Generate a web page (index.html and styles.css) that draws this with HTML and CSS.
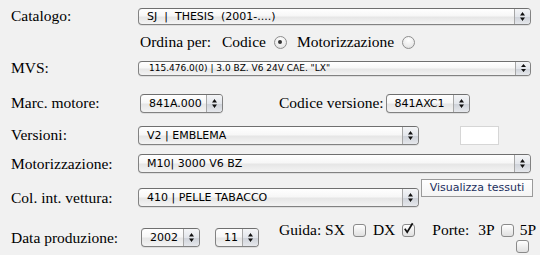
FILE: index.html
```html
<!DOCTYPE html>
<html>
<head>
<meta charset="utf-8">
<link rel="stylesheet" href="styles.css">
</head>
<body>
<div class="form">
  <div class="row r1">
    <div class="label">Catalogo:</div>
    <div class="sel w-full"><span class="val">SJ&nbsp;&nbsp;|&nbsp;&nbsp;THESIS&nbsp;&nbsp;(2001-....)</span><span class="arr"><svg width="5" height="9" viewBox="0 0 5 9"><path d="M2.5 0 L5 3.5 H0 Z M0 5.5 H5 L2.5 9 Z"/></svg></span></div>
  </div>
  <div class="row r2">
    <div class="label"></div>
    <div class="order">
      <span class="t-ordina">Ordina per:</span>
      <span class="t-opt">Codice</span><span class="radio on"></span>
      <span class="t-opt">Motorizzazione</span><span class="radio"></span>
    </div>
  </div>
  <div class="row r3">
    <div class="label">MVS:</div>
    <div class="sel mini w-full"><span class="val">115.476.0(0) | 3.0 BZ. V6 24V CAE. "LX"</span><span class="arr"><svg width="5" height="8" viewBox="0 0 5 8"><path d="M2.5 0 L5 3 H0 Z M0 5 H5 L2.5 8 Z"/></svg></span></div>
  </div>
  <div class="row r4">
    <div class="label">Marc. motore:</div>
    <div class="cell-a"><div class="sel w-marc"><span class="val">841A.000</span><span class="arr"><svg width="5" height="9" viewBox="0 0 5 9"><path d="M2.5 0 L5 3.5 H0 Z M0 5.5 H5 L2.5 9 Z"/></svg></span></div></div>
    <span class="t-inline">Codice versione:</span>
    <div class="sel w-cv"><span class="val">841AXC1</span><span class="arr"><svg width="5" height="9" viewBox="0 0 5 9"><path d="M2.5 0 L5 3.5 H0 Z M0 5.5 H5 L2.5 9 Z"/></svg></span></div>
  </div>
  <div class="row r5">
    <div class="label">Versioni:</div>
    <div class="sel w-half"><span class="val">V2 | EMBLEMA</span><span class="arr"><svg width="5" height="9" viewBox="0 0 5 9"><path d="M2.5 0 L5 3.5 H0 Z M0 5.5 H5 L2.5 9 Z"/></svg></span></div>
    <div class="box"></div>
  </div>
  <div class="row r6">
    <div class="label">Motorizzazione:</div>
    <div class="sel w-full"><span class="val">M10| 3000 V6 BZ</span><span class="arr"><svg width="5" height="9" viewBox="0 0 5 9"><path d="M2.5 0 L5 3.5 H0 Z M0 5.5 H5 L2.5 9 Z"/></svg></span></div>
  </div>
  <div class="row r7">
    <div class="label">Col. int. vettura:</div>
    <div class="sel w-half"><span class="val">410 | PELLE TABACCO</span><span class="arr"><svg width="5" height="9" viewBox="0 0 5 9"><path d="M2.5 0 L5 3.5 H0 Z M0 5.5 H5 L2.5 9 Z"/></svg></span></div>
    <button class="btn">Visualizza tessuti</button>
  </div>
  <div class="row r8">
    <div class="label">Data produzione:</div>
    <div class="cell-a dates">
      <div class="sel w-year"><span class="val">2002</span><span class="arr"><svg width="5" height="9" viewBox="0 0 5 9"><path d="M2.5 0 L5 3.5 H0 Z M0 5.5 H5 L2.5 9 Z"/></svg></span></div>
      <div class="sel w-month"><span class="val">11</span><span class="arr"><svg width="5" height="9" viewBox="0 0 5 9"><path d="M2.5 0 L5 3.5 H0 Z M0 5.5 H5 L2.5 9 Z"/></svg></span></div>
    </div>
    <div class="opts">
      <div class="opts-line">
        <span>Guida: SX</span><span class="check c-sx"></span>
        <span>DX</span><span class="check c-dx on"><svg width="12" height="13" viewBox="0 0 12 13"><path d="M2.8 6.8 L5.2 10.2 L10.6 1.2" fill="none" stroke="#111" stroke-width="1.7"/></svg></span>
        <span class="porte">Porte:</span><span class="p3">3P</span><span class="check c-3p"></span>
        <span class="p5">5P</span>
      </div>
      <div class="opts-line2"><span class="check"></span></div>
    </div>
  </div>
</div>
</body>
</html>
```

FILE: styles.css
```css
html, body {
  margin: 0;
  padding: 0;
  background: #f1f1f1;
}
body {
  width: 540px;
  height: 255px;
  overflow: hidden;
  font-family: "Liberation Serif", "Times New Roman", serif;
  font-size: 15.5px;
  color: #000;
}
.form {
  padding-left: 11px;
}
.row {
  display: flex;
  align-items: center;
}
.label {
  width: 127px;
  flex: none;
}
.r1 { height: 32px; }
.r2 { height: 20px; }
.r3 { height: 32px; }
.r4 { height: 38px; }
.r5 { height: 26px; }
.r6 { height: 31px; }
.r7 { height: 37px; }
.r8 { height: 40px; }

.sel {
  display: flex;
  align-items: stretch;
  height: 19px;
  box-sizing: border-box;
  border: 1px solid #828282;
  border-top-color: #6f6f6f;
  border-radius: 4px;
  background: linear-gradient(#ffffff 0%, #f7f7f7 45%, #e6e6e6 55%, #f4f4f4 100%);
  box-shadow: 0 1px 0 rgba(0,0,0,0.08);
  font-family: "DejaVu Sans", Verdana, sans-serif;
  font-size: 11px;
  color: #000;
  overflow: hidden;
}
.sel .val {
  flex: 1;
  padding-left: 8px;
  line-height: 17px;
  white-space: nowrap;
  overflow: hidden;
}
.sel .arr {
  width: 15px;
  flex: none;
  display: flex;
  align-items: center;
  justify-content: center;
  border-left: 1px solid #a6a6a6;
  background: linear-gradient(#f4f5f7 0%, #e3e6eb 50%, #cfd3da 55%, #e6e8ec 100%);
}
.sel .arr svg { fill: #111; display: block; }
.sel.mini {
  height: 15px;
  font-size: 9px;
}
.sel.mini .val { line-height: 13px; padding-left: 10px; }
.sel.mini .arr { width: 14px; }

.w-full { width: 393px; }
.r1 .sel { height: 17px; }
.r1 .sel .val { line-height: 15px; }
.w-half { width: 281px; }
.w-marc { width: 83px; margin-left: 2px; }
.w-cv { width: 84px; margin-left: 2px; }
.w-year { width: 59px; margin-left: 3px; }
.w-month { width: 44px; margin-left: 15px; }

.cell-a {
  width: 141px;
  flex: none;
  display: flex;
  align-items: center;
}
.r8 .cell-a { padding-top: 2px; }
.r8 .label { padding-top: 4px; }

.order {
  display: flex;
  align-items: center;
  padding-left: 2px;
}
.t-ordina { margin-right: 11px; }
.t-opt { margin-right: 8px; }
.radio {
  width: 13px;
  height: 13px;
  box-sizing: border-box;
  border: 1px solid #8e8e8e;
  border-radius: 50%;
  background: radial-gradient(circle at 50% 30%, #ffffff 0%, #ececec 60%, #d6d6d6 100%);
  margin-right: 10px;
  position: relative;
}
.radio.on::after {
  content: "";
  position: absolute;
  left: 3.5px;
  top: 3.5px;
  width: 4px;
  height: 4px;
  border-radius: 50%;
  background: #333;
}

.box {
  width: 39px;
  height: 19px;
  box-sizing: border-box;
  background: #fff;
  border: 1px solid #d6d6d6;
  margin-left: 41px;
}

.btn {
  align-self: flex-start;
  margin: 0 0 0 2px;
  width: 112px;
  height: 18px;
  box-sizing: border-box;
  border: 1px solid #9a9a9a;
  background: linear-gradient(#ffffff, #f4f4f4);
  font-family: "DejaVu Sans", Verdana, sans-serif;
  font-size: 11px;
  color: #1c2f5e;
  padding: 0;
  line-height: 14px;
}

.opts {
  flex: none;
  display: flex;
  flex-direction: column;
  padding-top: 2px;
}
.opts-line {
  display: flex;
  align-items: center;
  white-space: nowrap;
}
.opts-line2 {
  display: flex;
  padding-left: 237px;
  height: 14px;
  align-items: center;
}
.check {
  width: 13px;
  height: 13px;
  box-sizing: border-box;
  border: 1px solid #8a8a8a;
  border-radius: 3px;
  background: linear-gradient(#ffffff, #efefef 50%, #e0e0e0);
  position: relative;
  flex: none;
}
.c-sx { margin: 0 7px 0 8px; }
.c-dx { margin: 0 0 0 7px; }
.c-3p { margin: 0 0 0 6px; }
.check.on svg {
  position: absolute;
  left: -1px;
  top: -3px;
}
.porte { margin-left: 17px; }
.p3 { margin-left: 9px; }
.p5 { margin-left: 6px; }
</style>
```
